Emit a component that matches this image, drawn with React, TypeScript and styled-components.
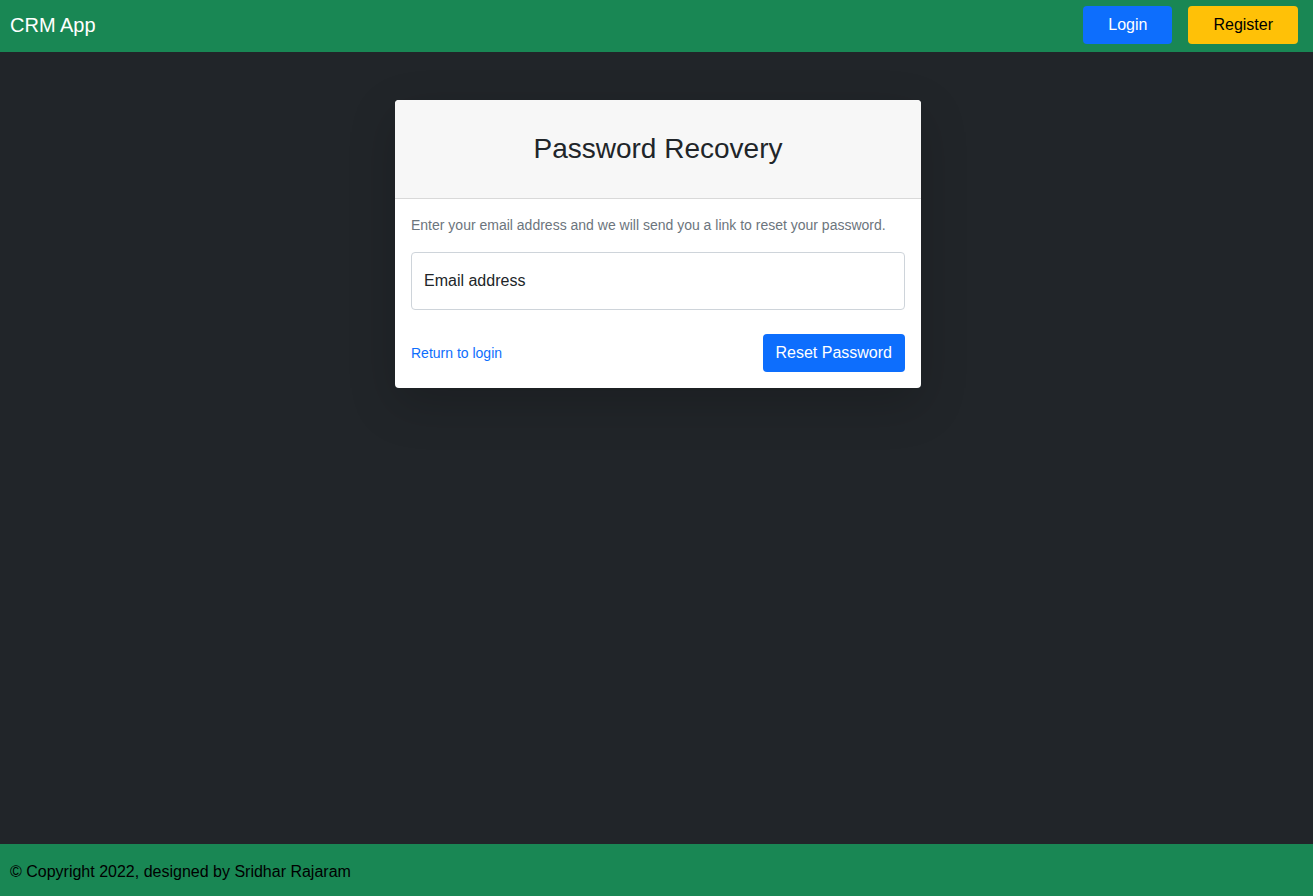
import React from "react";
import styled, { createGlobalStyle } from "styled-components";

const GlobalStyle = createGlobalStyle`
  *, *::before, *::after { box-sizing: border-box; }
  body {
    margin: 0;
    background: #212529;
    color: #212529;
    font-family: "Liberation Sans", Arial, sans-serif;
    font-size: 16px;
    line-height: 24px;
  }
`;

const Page = styled.div`
  min-height: 100vh;
  display: flex;
  flex-direction: column;
`;

const TopBar = styled.header`
  display: flex;
  align-items: center;
  justify-content: space-between;
  height: 52px;
  padding: 0 15px 2px 10px;
  background: #198754;
`;

const Brand = styled.a`
  color: #fff;
  font-size: 20px;
  line-height: 30px;
  text-decoration: none;
`;

const NavActions = styled.nav`
  display: flex;
  gap: 16px;
`;

const Button = styled.button<{ $tone?: "primary" | "warning"; $wide?: boolean }>`
  height: 38px;
  padding: 0 ${(p) => (p.$wide ? 25 : 13)}px;
  border: 0;
  border-radius: 4px;
  background: ${(p) => (p.$tone === "warning" ? "#ffc107" : "#0d6efd")};
  color: ${(p) => (p.$tone === "warning" ? "#000" : "#fff")};
  font: inherit;
  cursor: pointer;
`;

const Main = styled.main`
  flex: 1;
  display: flex;
  justify-content: center;
  align-items: flex-start;
  padding: 48px 12px 24px 15px;
`;

const Card = styled.section`
  width: 100%;
  max-width: 526px;
  border-radius: 4px;
  background: #fff;
  box-shadow: 0 16px 48px rgba(0, 0, 0, 0.175);
`;

const CardHeader = styled.header`
  padding: 32px 16px;
  border-bottom: 1px solid #d9d9d9;
  border-radius: 4px 4px 0 0;
  background: #f7f7f7;
`;

const Title = styled.h1`
  margin: 0;
  font-size: 28px;
  font-weight: 400;
  line-height: 34px;
  text-align: center;
`;

const Form = styled.form`
  padding: 16px;
`;

const Hint = styled.p`
  margin: 0 0 16px;
  color: #6c757d;
  font-size: 14px;
  line-height: 21px;
`;

const Field = styled.div`
  position: relative;
`;

const FieldLabel = styled.label`
  position: absolute;
  top: 17px;
  left: 13px;
  pointer-events: none;
`;

const Input = styled.input`
  display: block;
  width: 100%;
  height: 58px;
  padding: 16px 12px;
  border: 1px solid #ced4da;
  border-radius: 4px;
  background: #fff;
  color: inherit;
  font: inherit;

  &:focus + ${FieldLabel}, &:not(:placeholder-shown) + ${FieldLabel} {
    top: 4px;
    font-size: 14px;
  }
`;

const FormFooter = styled.div`
  display: flex;
  align-items: center;
  justify-content: space-between;
  margin-top: 24px;
`;

const TextLink = styled.a`
  color: #0d6efd;
  font-size: 14px;
  line-height: 21px;
  text-decoration: none;
`;

const Footer = styled.footer`
  padding: 16px 10px 12px;
  background: #198754;
  color: #000;
`;

export default function App() {
  return (
    <>
      <GlobalStyle />
      <Page>
        <TopBar>
          <Brand href="#home">CRM App</Brand>
          <NavActions>
            <Button type="button" $wide>Login</Button>
            <Button type="button" $tone="warning" $wide>Register</Button>
          </NavActions>
        </TopBar>
        <Main>
          <Card>
            <CardHeader>
              <Title>Password Recovery</Title>
            </CardHeader>
            <Form onSubmit={(event) => event.preventDefault()}>
              <Hint>Enter your email address and we will send you a link to reset your password.</Hint>
              <Field>
                <Input id="email" type="email" placeholder=" " />
                <FieldLabel htmlFor="email">Email address</FieldLabel>
              </Field>
              <FormFooter>
                <TextLink href="#login">Return to login</TextLink>
                <Button type="submit">Reset Password</Button>
              </FormFooter>
            </Form>
          </Card>
        </Main>
        <Footer>© Copyright 2022, designed by Sridhar Rajaram</Footer>
      </Page>
    </>
  );
}
